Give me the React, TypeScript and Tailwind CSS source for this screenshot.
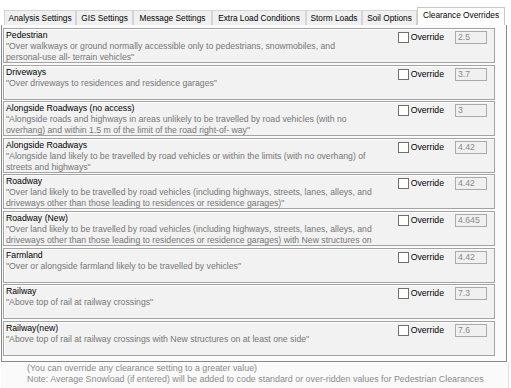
import React from 'react';

const tabs = [
  { label: 'Analysis Settings', w: 'w-[72px]' },
  { label: 'GIS Settings', w: 'w-[57px]' },
  { label: 'Message Settings', w: 'w-[79px]' },
  { label: 'Extra Load Conditions', w: 'w-[94px]' },
  { label: 'Storm Loads', w: 'w-[56px]' },
  { label: 'Soil Options', w: 'w-[55px]' },
];

const rows = [
  {
    title: 'Pedestrian',
    lines: [
      '"Over walkways or ground normally accessible only to pedestrians, snowmobiles, and',
      'personal-use all- terrain vehicles"',
    ],
    value: '2.5',
  },
  {
    title: 'Driveways',
    lines: ['"Over driveways to residences and residence garages"'],
    value: '3.7',
  },
  {
    title: 'Alongside Roadways (no access)',
    lines: [
      '"Alongside roads and highways in areas unlikely to be travelled by road vehicles (with no',
      'overhang) and within 1.5 m of the limit of the road right-of- way"',
    ],
    value: '3',
  },
  {
    title: 'Alongside Roadways',
    lines: [
      '"Alongside land likely to be travelled by road vehicles or within the limits (with no overhang) of',
      'streets and highways"',
    ],
    value: '4.42',
  },
  {
    title: 'Roadway',
    lines: [
      '"Over land likely to be travelled by road vehicles (including highways, streets, lanes, alleys, and',
      'driveways other than those leading to residences or residence garages)"',
    ],
    value: '4.42',
  },
  {
    title: 'Roadway (New)',
    lines: [
      '"Over land likely to be travelled by road vehicles (including highways, streets, lanes, alleys, and',
      'driveways other than those leading to residences or residence garages) with New structures on',
    ],
    value: '4.645',
  },
  {
    title: 'Farmland',
    lines: ['"Over or alongside farmland likely to be travelled by vehicles"'],
    value: '4.42',
  },
  {
    title: 'Railway',
    lines: ['"Above top of rail at railway crossings"'],
    value: '7.3',
  },
  {
    title: 'Railway(new)',
    lines: ['"Above top of rail at railway crossings with New structures on at least one side"'],
    value: '7.6',
  },
];

const App = () => {
  return (
    <div className="w-[511px] h-[388px] overflow-hidden bg-white font-['Liberation_Sans',Arial,sans-serif] text-[8.7px] text-black">
      {/* tab strip */}
      <div className="flex items-end h-[25px] pl-[4px]">
        {tabs.map((tab) => (
          <div
            key={tab.label}
            className={`${tab.w} h-[15px] flex items-center justify-center border border-b-0 border-[#d4d4d4] bg-[#f0f0f0] whitespace-nowrap text-[8.3px]`}
          >
            {tab.label}
          </div>
        ))}
        <div className="w-[88px] h-[18px] flex items-center justify-center border border-b-0 border-[#c8c8c8] bg-white whitespace-nowrap text-[8.3px] pb-[2px]">
          Clearance Overrides
        </div>
      </div>

      {/* scroll panel */}
      <div className="ml-[1px] w-[506px] h-[337px] border-l border-r border-b border-[#8a8a8a] bg-[#fbfbfb] pt-[3px] pl-[1px] overflow-hidden">
        <div className="flex flex-col gap-[1.6px] w-[492px]">
          {rows.map((row) => (
            <div
              key={row.title}
              className="h-[35px] flex border border-[#a3a3a3] bg-[#f2f2f2] shadow-[inset_1px_1px_0_#ffffff] overflow-hidden"
            >
              <div className="flex-1 pl-[2px] pt-[1px] leading-[11px]">
                <div className="whitespace-nowrap">{row.title}</div>
                {row.lines.map((line) => (
                  <div key={line} className="whitespace-nowrap text-[#767676]">
                    {line}
                  </div>
                ))}
              </div>
              <div className="flex items-start pt-[2px] pr-[7px]">
                <div className="w-[11px] h-[11px] border border-[#6f6f6f] bg-white mt-[1px]" />
                <span className="ml-[2px] leading-[13px]">Override</span>
                <div className="ml-[11px] w-[32px] h-[13px] border border-[#ababab] bg-[#f0f0f0] text-[#8a8a8a] leading-[11px] pl-[2px]">
                  {row.value}
                </div>
              </div>
            </div>
          ))}
        </div>
      </div>

      {/* footer */}
      <div className="ml-[1px] w-[508px] h-[26px] bg-[#fafafa] border-r border-[#e0e0e0] pl-[26px] pt-[1px] leading-[11px] text-[#8a8a8a] text-[8.9px]">
        <div className="whitespace-nowrap">(You can override any clearance setting to a greater value)</div>
        <div className="whitespace-nowrap">
          Note: Average Snowload (if entered) will be added to code standard or over-ridden values for Pedestrian Clearances
        </div>
      </div>
    </div>
  );
};

export default App;
